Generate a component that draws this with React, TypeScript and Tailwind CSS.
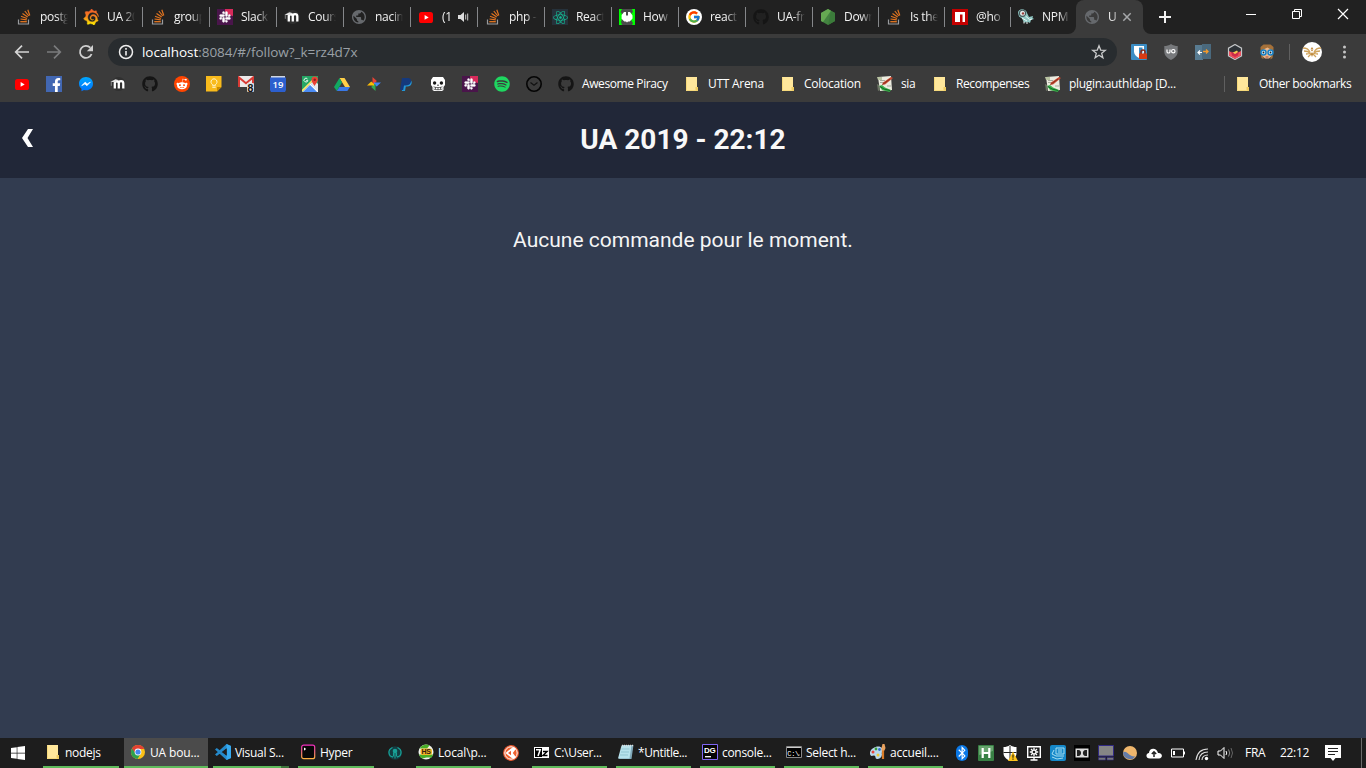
import React from 'react';
import type { ReactNode } from 'react';
import { FaGithub, FaRedditAlien, FaFacebookF, FaSlack, FaSpotify, FaReact, FaWindows, FaBluetoothB } from 'react-icons/fa';
import { FcGoogle } from 'react-icons/fc';
import { SiGrafana } from 'react-icons/si';

const Svg = ({ children, className = '' }: { children: ReactNode; className?: string }) => (
  <svg viewBox="0 0 16 16" className={`h-4 w-4 shrink-0 ${className}`} fill="none">{children}</svg>
);

const Stack = () => (
  <Svg>
    <path d="M2.500 10.500v4.500h10v-4.500" stroke="#9a9c9f" strokeWidth="1.200" />
    <path d="M4.300 12.700h6.500" stroke="#e87922" strokeWidth="1.300" />
    <path d="M4.500 10l6.300.9M5 7.200l6 2.300M6.500 4.400l5.200 3.700M8.800 2l4 5M11.800.8l2 5.700" stroke="#e07420" strokeWidth="1.200" />
  </Svg>
);
const Slack = () => (
  <Svg>
    <path d="M0 0h16v16H0z" fill="#4a154b" />
    <path d="M8 0h8v7l-4-1-4-3z" fill="#d72b5b" />
    <FaSlack x="1.7" y="1.7" size={12.6} fill="#fff" stroke="#fff" strokeWidth="12" />
  </Svg>
);
const Moodle = () => (
  <Svg>
    <circle cx="8.500" cy="8" r="7" fill="#303030" />
    <path d="M4.800 12.500V7.300a1.900 1.900 0 0 1 4 0v5.200M8.800 7.300a2.150 2.150 0 0 1 4.500 0v5.200" stroke="#fff" strokeWidth="2.300" />
    <path d="M.5 5.800L5.500 3.300l3.500.9-4.200 2z" fill="#e2e2e2" />
    <path d="M1.300 5.800v4" stroke="#999" strokeWidth=".8" />
  </Svg>
);
const Globe = () => (
  <svg viewBox="0.6 0.6 22.8 22.8" className="size-4 shrink-0">
    <path fill="#66696d" d="M12 2C6.480 2 2 6.480 2 12s4.480 10 10 10 10-4.480 10-10S17.520 2 12 2zm-1 17.930c-3.950-.490-7-3.850-7-7.930 0-.620.080-1.210.210-1.790L9 15v1c0 1.100.900 2 2 2v1.930zm6.900-2.540c-.260-.810-1-1.390-1.900-1.390h-1v-3c0-.550-.450-1-1-1H8v-2h2c.550 0 1-.450 1-1V7h2c1.100 0 2-.900 2-2v-.410c2.930 1.190 5 4.060 5 7.410 0 2.080-.800 3.970-2.100 5.390z" />
  </svg>
);
const YouTube = () => (
  <Svg>
    <rect x="1" y="3" width="14" height="11" rx="2.600" fill="#f00" />
    <path d="M6.600 6v4.700L10.700 8.400z" fill="#fff" />
  </Svg>
);
const ReactIcon = () => (
  <span className="flex size-4 shrink-0 items-center justify-center bg-[#26323b]"><FaReact className="size-[15px] text-[#15b892]" /></span>
);
const How = () => (
  <Svg>
    <path d="M0 0h16v16H0z" fill="#0f0" />
    <path d="M3 0h10l1 3-2 2v6l2 3-1 2H3l-1-3 1-3V5L1.500 3z" fill="#4c4c4c" />
    <path d="M5 3h2v3.500h2V3h2l2.500 3.600v3L10.700 12.500H9L8 13.500l-1-1H5.300L2.600 9.700V6z" fill="#fff" />
  </Svg>
);
const Google = () => (
  <Svg>
    <circle cx="8" cy="8" r="8" fill="#fff" />
    <FcGoogle x="1.2" y="1.2" size={13.6} />
  </Svg>
);
const Github = () => <FaGithub className="size-4 shrink-0 text-[#151515]" />;
const Grafana = () => (
  <Svg>
    <defs><linearGradient id="gf" x1="0" y1="0" x2="0" y2="1"><stop offset="0" stopColor="#f15b2a" /><stop offset=".45" stopColor="#f5801f" /><stop offset="1" stopColor="#fff100" /></linearGradient></defs>
    <SiGrafana size={16} fill="url(#gf)" stroke="url(#gf)" strokeWidth=".6" />
  </Svg>
);
const Node = () => (
  <Svg>
    <path d="M8 0l7 4v8l-7 4-7-4V4z" fill="#448341" />
    <path d="M1 4l7-4 3 1.800L3 13 1 12z" fill="#65a952" />
    <path d="M8 16l7-4V4l-4-2z" fill="#3b7b3a" />
  </Svg>
);
const Npm = () => (
  <Svg><path d="M0 0h16v16H0z" fill="#c40000" /><path d="M3 3h10v10h-2.500V5.500H8V13H3z" fill="#fff" /></Svg>
);
const Bird = () => (
  <Svg>
    <path d="M0 4c0-5 8-5 9 0l2 4 4-1-.5 2 1.500 1-3 1-1 3-2-1-4 .5-2-4-3-2z" fill="#8fc7c3" />
    <circle cx="4.500" cy="4.300" r="3.600" fill="#45585b" /><circle cx="4.500" cy="4.300" r="2.500" fill="#dfe9e9" /><circle cx="5" cy="4.400" r="1.200" fill="#9b3d38" />
    <path d="M4 9l5 3M7.500 7l3.500 3M6 12.500v2M9 13v2M11 11l3-1" stroke="#eaf5f3" />
  </Svg>
);
const Messenger = () => (
  <Svg>
    <defs><linearGradient id="ms" x1="0" y1="0" x2="0" y2="1"><stop stopColor="#00a8ff" /><stop offset="1" stopColor="#0071fb" /></linearGradient></defs>
    <path d="M8 1c4 0 7 2.800 7 6.700s-3 6.600-7 6.600c-.7 0-1.400-.1-2-.3L3.500 15.300v-2.500C2 11.600 1 9.800 1 7.700 1 3.800 4 1 8 1z" fill="url(#ms)" />
    <path d="M3.700 9.700l3.500-3.600 2 1.800 3.200-1.800-3.500 3.700-2-1.900z" fill="#fff" stroke="#fff" strokeWidth=".6" />
  </Svg>
);
const Facebook = () => (
  <span className="flex size-4 shrink-0 items-end justify-end overflow-hidden bg-[#4267b2]"><FaFacebookF className="h-[14px] w-[11px] text-white" /></span>
);
const Reddit = () => (
  <span className="flex size-4 shrink-0 items-center justify-center rounded-full bg-[#ff4500]"><FaRedditAlien className="size-[12px] text-white" /></span>
);
const Keep = () => (
  <Svg>
    <path d="M0 0h15.500v11l-4.500 4.500H0z" fill="#f9bb1c" /><path d="M11 15.500V11h4.500z" fill="#c98a00" />
    <path d="M6.400 9.300V8.400a3 3 0 1 1 3.200 0v.9z" stroke="#fff5cf" strokeWidth="1" /><path d="M6.300 11.200h3.400" stroke="#fff5cf" strokeWidth="1.200" />
  </Svg>
);
const Gmail = () => (
  <Svg>
    <path d="M0 0h16v11H0z" fill="#ece9e9" /><path d="M1 11V1.500l7 5.700 7-5.700V8" stroke="#d93b35" strokeWidth="2" />
    <rect x="9" y="7" width="7" height="9" rx="1" fill="#ddd" />
    <text x="9.500" y="15.500" fontSize="10.500" fontWeight="700" fill="#111" fontFamily="Liberation Sans, sans-serif">8</text>
  </Svg>
);
const Calendar = () => (
  <Svg>
    <path d="M1 0h14v3H1z" fill="#cfd6e2" /><path d="M0 1.500h16V14l-1 2H1l-1-2z" fill="#2c5fce" />
    <text x="8" y="12" textAnchor="middle" fontSize="9.500" fontWeight="600" fill="#fff" fontFamily="Open Sans, sans-serif">19</text>
  </Svg>
);
const Maps = () => (
  <Svg>
    <path d="M0 0h16v16H0z" fill="#25a665" /><path d="M0 16L12 4l4 4v8z" fill="#e7e9eb" /><path d="M1 16l8-8 7 8z" fill="#4b8cf5" /><path d="M0 15L13 2" stroke="#ffe36b" strokeWidth="1.600" />
    <path d="M8 8l8 8" stroke="#fff" strokeWidth="1.200" />
    <path d="M12.500 10C11 7.500 9.500 6 9.500 3.800a3.200 3.200 0 0 1 6.400 0C15.900 6 14 7.500 12.500 10z" fill="#e94335" /><circle cx="12.700" cy="3.800" r="1.200" fill="#8d211a" />
    <path d="M5.500 3a1.900 1.900 0 1 0 .3 1.600H4.200" stroke="#fff" strokeWidth=".9" />
  </Svg>
);
const Drive = () => (
  <Svg><path d="M5.500 2h5L16 11h-5z" fill="#ffcf48" /><path d="M5.500 2L8 6.400 2.800 15 0 11z" fill="#11a861" /><path d="M5.400 11H16l-2.700 4H2.800z" fill="#3978e6" /></Svg>
);
const Photos = () => (
  <Svg><path d="M6.500 1l4.300 4L8 8H6.500z" fill="#ea4335" /><path d="M15 6.500l-4.300 4L8 8V6.500z" fill="#4285f4" /><path d="M9.500 15l-4.300-4L8 8h1.500z" fill="#34a853" /><path d="M1 9.500l4.300-4L8 8v1.500z" fill="#fbbc05" /></Svg>
);
const PayPal = () => (
  <Svg><path d="M6 4.500h7c1.500 1.500.8 6-3.500 6H7.800L7 15H3.800z" fill="#2297d8" /><path d="M4 2h5.500c3.500 0 4.200 2.200 3.200 4.500-.8 2.200-2.500 3-5 3H6L5.200 14H2z" fill="#15397c" /></Svg>
);
const Skull = () => (
  <Svg>
    <path d="M3 1h10l2 3v5l-1.500 2v3L12 15H4l-1.500-1v-3L1 9V4z" fill="#fff" />
    <circle cx="4.600" cy="7" r="1.700" fill="#161616" /><circle cx="11.400" cy="7" r="1.700" fill="#161616" />
    <path d="M8 8L7 9.700h2z" fill="#333" /><path d="M3.500 10.800c2 1 7 1 9 0M3.500 13c2 1 7 1 9 0M5.500 11v2.500M8 11.500V14M10.500 11v2.500" stroke="#333" strokeWidth=".7" />
  </Svg>
);
const Watch = () => (
  <Svg><circle cx="8" cy="8" r="7.200" stroke="#050505" strokeWidth="1.600" /><path d="M4.500 6.500L8 9.300l3.500-2.800" stroke="#111" strokeWidth="1.200" /></Svg>
);
const Folder = () => (
  <Svg><path d="M2 1h11v10l1 1v3H2z" fill="#ffe79b" /><path d="M11.500 11h2.500v4h-2.500z" fill="#efcc61" /><path d="M2.500 1.500v13h10" stroke="#f6d97b" /></Svg>
);
const Sia = () => (
  <Svg>
    <path d="M1 1l13-1 1 14-12 1z" fill="#ecebdf" /><path d="M0 1h5v3H1z" fill="#b9c3a2" /><path d="M3 4.500h5M3 6.500h4M10 10h4" stroke="#8d8f83" strokeWidth=".7" />
    <path d="M6 6.500L14 1l2 1-8 6.500-3 .3z" fill="#c8472f" /><path d="M5.500 8.500L13 3" stroke="#702717" strokeWidth=".7" />
    <path d="M2 10l3-1 3 2.500 6 2.500-1.500 2L5 14z" fill="#3cae49" /><path d="M3 10.500l4 2.500 6 1.500" stroke="#0d6a27" />
    <path d="M0 8l2 1 1 5-2 1z" fill="#6c7464" />
  </Svg>
);

const TABS: { icon: ReactNode; text: string; w: string }[] = [
  { icon: <Stack />, text: 'postg', w: 'w-[67px]' },
  { icon: <Grafana />, text: 'UA 20', w: 'w-[67px]' },
  { icon: <Stack />, text: 'group', w: 'w-[67px]' },
  { icon: <Slack />, text: 'Slack', w: 'w-[67px]' },
  { icon: <Moodle />, text: 'Cours', w: 'w-[67px]' },
  { icon: <Globe />, text: 'nacim', w: 'w-[67px]' },
  { icon: <YouTube />, text: '(1', w: 'w-[67px]' },
  { icon: <Stack />, text: 'php -', w: 'w-[67px]' },
  { icon: <ReactIcon />, text: 'React', w: 'w-[67px]' },
  { icon: <How />, text: 'How', w: 'w-[67px]' },
  { icon: <Google />, text: 'react', w: 'w-[67px]' },
  { icon: <Github />, text: 'UA-fr', w: 'w-[67px]' },
  { icon: <Node />, text: 'Down', w: 'w-[66px]' },
  { icon: <Stack />, text: 'Is the', w: 'w-[66px]' },
  { icon: <Npm />, text: '@ho', w: 'w-[66px]' },
  { icon: <Bird />, text: 'NPM', w: 'w-[66px]' },
];

function TabStrip() {
  return (
    <div className="flex h-[34px] bg-[#212121] pl-[9px] text-[12px] text-[#f2f2f2]">
      {TABS.map((t, i) => (
        <div key={i} className={`flex shrink-0 items-center pl-[7px] ${t.w}`}>
          {t.icon}
          <span className="ml-2 w-7 shrink-0 overflow-hidden whitespace-nowrap tracking-[-0.3px] [mask-image:linear-gradient(to_right,black_60%,transparent)]">{t.text}</span>
          {t.text === '(1' && (
            <Svg className="-ml-[14px]"><path d="M2 6h2.500L8 3v10l-3.500-3H2z" fill="#ddd" /><path d="M9.700 5.500v5M11.700 4.500v7" stroke="#ccc" strokeWidth="1" /></Svg>
          )}
          {i < 15 && <span className="ml-auto h-5 w-px bg-[#85878a]" />}
        </div>
      ))}
      <div className="relative z-10 -ml-px flex w-[67px] shrink-0 items-center rounded-t-lg bg-[#3b3b3b] pl-2">
        <svg className="absolute bottom-0 -left-2 h-2 w-2" viewBox="0 0 8 8"><path d="M8 0v8H0a8 8 0 0 0 8-8z" fill="#3b3b3b" /></svg>
        <svg className="absolute bottom-0 -right-2 h-2 w-2" viewBox="0 0 8 8"><path d="M0 0v8h8a8 8 0 0 1-8-8z" fill="#3b3b3b" /></svg>
        <Globe />
        <span className="ml-2 w-[9px] [mask-image:linear-gradient(to_right,black_30%,#0009)]">U</span>
        <Svg className="ml-[2px]"><path d="M4.300 4.300l7.400 7.400m0-7.400l-7.400 7.400" stroke="#a5a7a9" strokeWidth="1.500" /></Svg>
      </div>
      <Svg className="ml-[14px] mt-[9px]"><path d="M8 2v12M2 8h12" stroke="#f1f1f1" strokeWidth="2" /></Svg>
      <div className="ml-auto flex gap-[30px] pr-[15px] pt-[6px]">
        <Svg><path d="M3 8.500h10" stroke="#fff" /></Svg>
        <Svg><path d="M3.500 5.500h7v7h-7zM5.500 5.500v-2h7v7h-2" stroke="#fff" /></Svg>
        <Svg><path d="M3 3l10 10M13 3L3 13" stroke="#fff" strokeWidth="1.200" /></Svg>
      </div>
    </div>
  );
}

function Toolbar() {
  return (
    <div className="flex h-9 items-center bg-[#3b3b3b]">
      <Svg className="ml-[14px]"><path d="M15 8H2.200M8 1.700L1.700 8 8 14.300" stroke="#d5d5d5" strokeWidth="1.700" /></Svg>
      <Svg className="ml-4"><path d="M1 8h12.800M8 1.700L14.300 8 8 14.300" stroke="#7b7c7d" strokeWidth="1.700" /></Svg>
      <Svg className="ml-4"><path d="M13.600 10A6 6 0 1 1 12.300 3.700" stroke="#d0d0d0" strokeWidth="1.800" /><path d="M15 1v6.200H8.800z" fill="#d0d0d0" /></Svg>
      <div className="ml-[14px] flex h-7 w-[1009px] items-center rounded-full bg-[#282c2f] pl-[10px] pr-[10px]">
        <Svg><circle cx="8" cy="8" r="6.500" stroke="#eee" strokeWidth="1.500" /><path d="M8 7v4.500M8 4v1.700" stroke="#eee" strokeWidth="1.600" /></Svg>
        <span className="ml-2 whitespace-nowrap text-[13.5px] tracking-[-0.04px] text-[#9aa0a6]"><span className="text-white">localhost</span>:8084/#/follow?_k=rz4d7x</span>
        <Svg className="ml-auto"><path d="M8 1.800l1.700 4.300 4.600.3-3.600 2.900 1.200 4.500L8 11.300l-3.900 2.500 1.200-4.500-3.600-2.900 4.600-.3z" stroke="#cacbcc" strokeWidth="1.300" /></Svg>
      </div>
      <div className="ml-[14px] flex gap-4">
        <Svg><rect width="16" height="16" rx="1" fill="#3b8dc4" /><path d="M3 2h10v5.500c0 3-2 5-5 6.500-3-1.500-5-3.500-5-6.500z" fill="#fff" /><path d="M8 3.500h3.500V8c0 2-1 3-3.500 4z" fill="#3b8dc4" /><path d="M10 10V8a2 2 0 0 1 4 0v2" stroke="#8e2614" strokeWidth="1.500" /><path d="M8 9.500h8V15H8z" fill="#d83a14" /></Svg>
        <Svg><path d="M8 0c2 1.500 4.500 2 6.700 2v5.500c0 4-3 6.800-6.700 8.500-3.700-1.700-6.700-4.500-6.700-8.500V2C3.500 2 6 1.500 8 0z" fill="#77797c" /><path d="M4 5.500v2.200c0 1.700 3 1.700 3 0V5.500" stroke="#fff" strokeWidth="1.200" /><circle cx="10.300" cy="7.200" r="1.700" stroke="#fff" strokeWidth="1.200" /></Svg>
        <Svg><path d="M0 1h8v15H0z" fill="#587b91" /><path d="M7 0h9v15H7z" fill="#4a697d" /><path d="M3 8.500h4M5 6.500l-2 2 2 2" stroke="#fff" strokeWidth="1.200" /><path d="M8 7.500h5M11 5.500l2 2-2 2" stroke="#f49b2c" strokeWidth="1.300" /></Svg>
        <Svg><path d="M8 .5l6.500 3.700v7.600L8 15.500l-6.500-3.700V4.200z" fill="#2e3338" stroke="#c6c8ca" strokeWidth="1.200" /><path d="M2 7l3 1.500L8 8l3 .5L14 7v4.500L8 15l-6-3.500z" fill="#f0515e" /><path d="M4 7.500L8 10l4-2.500-1 4L8 13l-3-1.500z" fill="#cb2d49" /><path d="M6 8.500L8 10l3-2-1-1.500z" fill="#f3ca4f" /></Svg>
        <Svg><path d="M1.500 8V3l3-2.500h7l3 2.500v5l-1 6-2 1.500v-8h-7V15l-2-1z" fill="#a5713a" /><path d="M3.500 6l5-2.500L12.500 6v6L10 14.500H6L3.500 12z" fill="#efb88a" /><circle cx="4.500" cy="8.500" r="2.500" fill="#d6f1ff" stroke="#1681c8" strokeWidth="1.500" /><circle cx="11.500" cy="8.500" r="2.500" fill="#d6f1ff" stroke="#1681c8" strokeWidth="1.500" /><circle cx="4.500" cy="8.500" r=".9" fill="#222" /><circle cx="11.500" cy="8.500" r=".9" fill="#222" /><path d="M6.500 13h3" stroke="#9c493f" /></Svg>
      </div>
      <span className="ml-[14px] h-4 w-px bg-[#606060]" />
      <svg viewBox="0 0 20 20" className="ml-3 size-5" fill="none"><circle cx="10" cy="10" r="10" fill="#fff" /><path d="M1 6c4 0 5 1 7 4M2 9c3 0 4 0 6 2M4 12c2 0 3 0 5-1M19 6c-4 0-5 1-7 4M18 9c-3 0-4 0-6 2M16 12c-2 0-3 0-5-1M6 15l3-3M14 15l-3-3" stroke="#cfa25a" strokeWidth="1.300" /><path d="M10 5l1.300 2H8.700zM8.500 7.500L10 9.500l1.500-2M10 10l1.200 2L10 15l-1.200-3z" fill="#bd8638" /></svg>
      <Svg className="ml-[14px]"><g fill="#c5c5c5"><circle cx="8.500" cy="3" r="1.500" /><circle cx="8.500" cy="8" r="1.500" /><circle cx="8.500" cy="13" r="1.500" /></g></Svg>
    </div>
  );
}

const Mark = ({ icon, text, className }: { icon: ReactNode; text: string; className: string }) => (
  <div className={`flex shrink-0 items-center gap-2 whitespace-nowrap ${className}`}>{icon}<span>{text}</span></div>
);

function Bookmarks() {
  return (
    <div className="flex h-8 items-center bg-[#3b3b3b] pb-[4px] pl-[14px] text-[12px] text-white">
      <div className="mr-4 flex gap-4">
        <YouTube /><Facebook /><Messenger /><Moodle /><Github /><Reddit /><Keep /><Gmail /><Calendar /><Maps /><Drive /><Photos /><PayPal /><Skull /><Slack />
        <FaSpotify className="size-4 text-[#1ed760]" /><Watch />
      </div>
      <Mark icon={<Github />} text="Awesome Piracy" className="w-[126px] tracking-[-0.4px]" />
      <Mark icon={<Folder />} text="UTT Arena" className="w-24 tracking-[-0.28px]" />
      <Mark icon={<Folder />} text="Colocation" className="w-[97px] tracking-[-0.25px]" />
      <Mark icon={<Sia />} text="sia" className="w-[55px] tracking-[-0.35px]" />
      <Mark icon={<Folder />} text="Recompenses" className="w-[113px] tracking-[-0.42px]" />
      <Mark icon={<Sia />} text="plugin:authldap [D..." className="w-[179px] tracking-[-0.3px]" />
      <span className="mr-[10px] h-4 w-px bg-[#606060]" />
      <Mark icon={<Folder />} text="Other bookmarks" className="w-[130px] tracking-[-0.42px]" />
    </div>
  );
}

const Task = ({ icon, text, className, active = false }: { icon: ReactNode; text: string; className: string; active?: boolean }) => (
  <div className={`flex h-[30px] shrink-0 items-center gap-1 overflow-hidden whitespace-nowrap border-b-2 border-[#5fbb5c] ${active ? 'bg-[#4b4b4b]' : ''} ${className}`}>{icon}<span className="pt-px">{text}</span></div>
);

const Chrome = () => (
  <Svg><circle cx="8" cy="8" r="7" fill="#fbc116" /><path d="M8 8L2 4.400A7 7 0 0 0 7.500 15l3-5z" fill="#2da04e" /><path d="M8 5h6.300A7 7 0 0 0 2 4.400L5.300 9z" fill="#e34133" /><circle cx="8" cy="8" r="3.400" fill="#fff" /><circle cx="8" cy="8" r="2.600" fill="#4587ef" /></Svg>
);
const Code = () => (
  <Svg><path d="M11.500 0L16 2v12l-4.500 2L0 5.500 1.800 4 12 12V4L1.800 12 0 10.500z" fill="#2489ca" /><path d="M11.500 0L16 2v12l-4.500 2z" fill="#35a9ef" /><path d="M11.700 4.500v7L7.200 8z" fill="#1e1e1e" /></Svg>
);
const Hyper = () => (
  <Svg><defs><linearGradient id="hy" x1="0" y1="0" x2="0" y2="1"><stop stopColor="#f12bc0" /><stop offset="1" stopColor="#ffb340" /></linearGradient></defs><rect x="1.700" y="1.200" width="13" height="13.500" rx="2" fill="#080808" stroke="url(#hy)" strokeWidth="1.200" /><path d="M4.500 3.800v2.500M5.500 4.500v1" stroke="#fff" strokeWidth="1" /></Svg>
);
const Heidi = () => (
  <Svg><circle cx="8" cy="8" r="7.500" fill="#f1f4ee" /><path d="M1.500 4.500a7.500 7.500 0 0 1 10-3.100L9 4.500z" fill="#49ad28" /><path d="M.8 10.500a7.500 7.500 0 0 0 3.500 4.100c3-.6 6-1.500 8.500-.6a7.500 7.500 0 0 0 2.400-3.500z" fill="#49ad28" /><rect x="2.500" y="4.500" width="11.500" height="6.500" rx="2" fill="#f2b324" /><text x="8.200" y="10.400" textAnchor="middle" fontSize="7" fontWeight="700" fill="#321" fontFamily="Liberation Sans, sans-serif">HS</text></Svg>
);
const SevenZip = () => (
  <Svg><path d="M0 3h15v11H0z" fill="#fff" /><path d="M1 4h13v9H1z" fill="#000" /><path d="M8 4h6v9H8z" fill="#fff" /><path d="M2 5.700h4.200L4 12" stroke="#fff" strokeWidth="1.500" /><path d="M9 7.500h4l-4 4h4.500" stroke="#000" strokeWidth="1.500" /></Svg>
);
const Notepad = () => (
  <Svg><path d="M5 1h10.500l-2 14H1z" fill="#7fa7b8" /><path d="M3.500 1.500H13.500l-2 13H0z" fill="#b7e2ec" /><path d="M4 1.500h11" stroke="#ddd" strokeWidth="1.500" strokeDasharray="1 1" /><path d="M3.500 5h8M3 8h8M2 11h8" stroke="#83b9c7" strokeWidth=".7" /></Svg>
);
const DataGrip = () => (
  <Svg><path d="M.5.5h15v15H.5z" fill="#050505" stroke="#8066f5" /><text x="2" y="8.800" fontSize="8" fontWeight="700" fill="#fff" fontFamily="Liberation Sans, sans-serif">DG</text><path d="M3 12.700h6" stroke="#fff" strokeWidth="1.300" /></Svg>
);
const Cmd = () => (
  <Svg><path d="M.5 2.500h15v11H.5z" fill="#000" stroke="#888" /><path d="M1 3.500h14" stroke="#ccc" /><text x="1.300" y="11.500" fontSize="7" fill="#fff" fontFamily="Liberation Mono, monospace">C:\</text><path d="M12.500 11h1" stroke="#fff" /></Svg>
);
const Paint = () => (
  <Svg><path d="M0 10C-1 4 9 0 12 4c2 3-1 4 0 6 0 4-3 5-5 5s-1-3.500-3-3.500S1 13 0 10z" fill="#b9d9ee" /><circle cx="3" cy="8" r="1.500" fill="#e9453c" /><circle cx="6" cy="5" r="1.400" fill="#3a9d38" /><circle cx="9.500" cy="5.500" r="1.400" fill="#326fd0" /><circle cx="8" cy="11" r="1.500" fill="#f0c631" /><path d="M13 5v10" stroke="#d87b27" strokeWidth="2.200" /><path d="M12.500 0h2l1 4-1 2.500h-3V4z" fill="#e9a25f" /></Svg>
);

function Tray() {
  return (
    <div className="ml-[11px] flex items-center gap-2">
      <span className="flex h-4 w-4 items-center justify-center"><span className="flex h-4 w-3 items-center justify-center rounded-full bg-[#0a78e7]"><FaBluetoothB className="h-3.5 w-2.5 text-white" /></span></span>
      <Svg><rect width="16" height="16" rx="1" fill="#388044" /><path d="M1 1h14v5L1 10z" fill="#67a36e" /><path d="M4.700 3v10M11.300 3v10M4.500 8h7" stroke="#fff" strokeWidth="2.200" /></Svg>
      <Svg><path d="M8 0c2 1.500 4 2 6.500 2v6c0 4-3 6-6.500 8-3.500-2-6.500-4-6.500-8V2C4 2 6 1.500 8 0z" fill="#fff" /><path d="M8 1v14M1.500 7.500h13" stroke="#222" /><path d="M11 6.500l5 9.500H6z" fill="#fbc21b" /><path d="M11 9.500v3.200M11 13.500v1.200" stroke="#332900" strokeWidth="1.200" /></Svg>
      <Svg><path d="M1.700 1.700h12.600v10.600H1.700zM4.500 15h7M8 12v3" stroke="#fff" strokeWidth="1.400" /><path d="M8 2.800v8.400M3.800 7h8.400M5 4l6 6m0-6l-6 6" stroke="#fff" strokeWidth="1.300" /><circle cx="8" cy="7" r="2.500" fill="#fff" /><circle cx="8" cy="7" r="1.300" fill="#1d1d1d" /></Svg>
      <Svg><rect width="16" height="16" rx="2" fill="#1588c9" /><path d="M6 3h8v6H6zM4 5L2 9l4 2h8M2 12l5 2 6-1M8 5h4M8 7h4" stroke="#a5def2" strokeWidth="1" /></Svg>
      <Svg><path d="M0 0h16v16H0z" fill="#000" /><path d="M1.500 3.500h13v9h-13z" fill="#ddd" /><path d="M3 5h1.500c3.500 0 3.500 6 0 6H3zM13 5h-1.500c-3.500 0-3.500 6 0 6H13z" fill="#222" /></Svg>
      <Svg><path d="M.5.500h15v10.500H.5z" fill="#858585" stroke="#302983" /><path d="M.5 12.500h7v2.500h-7zM9 12.500h6.500v2.500H9z" fill="#777" stroke="#302983" strokeWidth=".6" /></Svg>
      <Svg><circle cx="8" cy="8" r="7" fill="#efb66c" /><path d="M1 7.500c4-3 6 5 12.500 4A7 7 0 0 1 1 7.500z" fill="#637ba8" /></Svg>
      <Svg><path d="M4 13.500C-.5 13.500-.6 8.500 3 8c0-5 7.500-6 9 0 5-.5 5 5.500 1 5.500z" fill="#fff" /><path d="M8 12V7M5.800 9L8 6.800 10.200 9" stroke="#222" strokeWidth="1.500" /></Svg>
      <Svg><path d="M1.500 4h12v8h-12zM14.500 6.500v3" stroke="#fff" strokeWidth="1" /><path d="M3 6h2v4H3z" fill="#fff" /></Svg>
      <Svg><path d="M2 15C3 8 7 4 14 4M5 15c.5-5 4-8 9-8M8 15c0-3 2-5 6-5" stroke="#ddd" strokeWidth="1.100" /><circle cx="12.500" cy="13.500" r="1.700" fill="#fff" /></Svg>
      <Svg className="-ml-px"><path d="M1 6h2.500L7 2.500v11L3.500 10H1z" stroke="#fff" /><path d="M9 6q1.500 2 0 4" stroke="#fff" /><path d="M11.500 4.500q2.500 3.500 0 7" stroke="#888" /><path d="M14 3q3 5 0 10" stroke="#666" /></Svg>
    </div>
  );
}

function Taskbar() {
  return (
    <footer className="flex h-[30px] items-center bg-[#1d1d1d] text-[12px] tracking-[-0.3px] text-white">
      <FaWindows className="ml-[10px] mr-[17px] size-4 shrink-0" />
      <Task icon={<Folder />} text="nodejs" className="mr-[5px] w-[76px] pl-[2px]" />
      <Task icon={<Chrome />} text="UA bou..." active className="mr-[5px] w-[84px] pl-[6px] tracking-[-0.15px]" />
      <Task icon={<Code />} text="Visual S..." className="w-[68px] overflow-visible! pl-[2px]" />
      <span className="mr-[9px] h-[2px] w-2 shrink-0 self-end bg-[#3f753d]" />
      <Task icon={<Hyper />} text="Hyper" className="w-[76px] pl-[2px]" />
      <Svg className="mx-[13px]"><circle cx="8" cy="8" r="6.800" fill="#143c42" /><path d="M5.500 2.500C0 5 1.500 11.500 6 12M10.500 2.500C16 5 14.500 11.500 10 12" stroke="#18a096" strokeWidth="1.300" /><path d="M8 7v6.500M6.500 7.500v4M9.500 7.500v4" stroke="#18a096" strokeWidth="1.100" /><circle cx="8" cy="6" r="2.300" fill="#18a096" /></Svg>
      <Task icon={<Heidi />} text={'Local\\p...'} className="w-[75px] pl-[2px] tracking-[-0.15px]" />
      <Svg className="ml-3 mr-[13px]"><circle cx="8" cy="8" r="7.300" fill="#f0612f" stroke="#e95830" strokeWidth="1.200" /><circle cx="8" cy="8" r="6.200" stroke="#fff" strokeWidth="1" /><path d="M2.500 8L8 3.500l2.500-1.500 2.500 1.800L9.800 8l3.200 4.200-2.500 1.800L8 12.500z" fill="#fff" /><path d="M5 8l3-2.300v4.600z" fill="#e95830" /></Svg>
      <Task icon={<SevenZip />} text={'C:\\User...'} className="mr-[9px] w-[75px] pl-[2px]" />
      <Task icon={<Notepad />} text="*Untitle..." className="mr-[9px] w-[75px] pl-[2px] tracking-[-0.4px]" />
      <Task icon={<DataGrip />} text="console..." className="mr-[9px] w-[75px] pl-[2px]" />
      <Task icon={<Cmd />} text="Select h..." className="mr-[9px] w-[75px] pl-[2px]" />
      <Task icon={<Paint />} text="accueil...." className="w-[75px] pl-[2px] tracking-[-0.2px]" />
      <Tray />
      <span className="ml-3 w-[35px]">FRA</span>
      <span className="w-[45px]">22:12</span>
      <Svg><path d="M0 0h16v13H10.500L8 16l-2.500-3H0z" fill="#fff" /><path d="M3 3.500h10M3 6.500h10M3 9.500h7" stroke="#222" strokeWidth="1" /></Svg>
      <span className="ml-5 h-full w-px bg-[#6a6a6a]" />
    </footer>
  );
}

export default function App() {
  return (
    <div className="flex h-screen w-[1366px] flex-col overflow-hidden bg-[#323c50] font-['Open_Sans','Noto_Sans',sans-serif]">
      <TabStrip />
      <Toolbar />
      <Bookmarks />
      <header className="grid h-[76px] shrink-0 grid-cols-[1fr_auto_1fr] items-center bg-[#212738] font-['Roboto',sans-serif] text-[#f8f8f8]">
        <svg viewBox="0 0 12 18" className="mt-[-4px] ml-[22px] h-[18px] w-3"><path d="M6 0h5L5.500 9l5.500 9H6L0 9z" fill="#fff" /></svg>
        <h1 className="text-[28px] leading-none font-bold">UA 2019 - 22:12</h1>
      </header>
      <main className="flex flex-1 justify-center pt-[46px] font-['Roboto',sans-serif] text-[21px] leading-8 text-[#f5f5f5]"><p>Aucune commande pour le moment.</p></main>
      <Taskbar />
    </div>
  );
}
